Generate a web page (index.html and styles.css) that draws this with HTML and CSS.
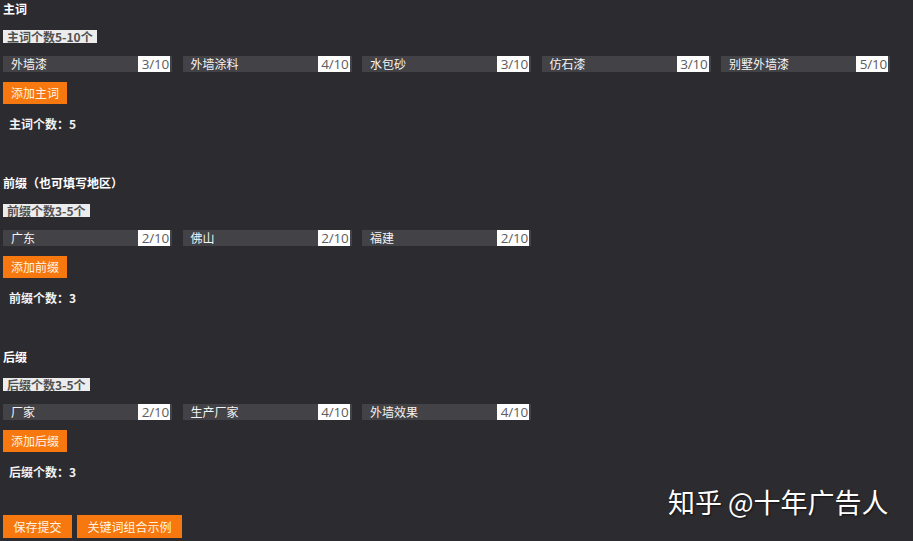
FILE: index.html
```html
<!DOCTYPE html>
<html lang="zh-CN">
<head>
<meta charset="utf-8">
<title>关键词设置</title>
<link rel="stylesheet" href="styles.css">
</head>
<body>
<div class="page">
  <section class="group">
    <div class="group-title">主词</div>
    <div class="hint"><span>主词个数5-10个</span></div>
    <div class="inputs">
      <div class="field"><span class="field-text">外墙漆</span><span class="count">3/10</span></div>
      <div class="field"><span class="field-text">外墙涂料</span><span class="count">4/10</span></div>
      <div class="field"><span class="field-text">水包砂</span><span class="count">3/10</span></div>
      <div class="field"><span class="field-text">仿石漆</span><span class="count">3/10</span></div>
      <div class="field"><span class="field-text">别墅外墙漆</span><span class="count">5/10</span></div>
    </div>
    <button class="btn btn-add">添加主词</button>
    <div class="total">主词个数：5</div>
  </section>

  <section class="group">
    <div class="group-title">前缀（也可填写地区）</div>
    <div class="hint"><span>前缀个数3-5个</span></div>
    <div class="inputs">
      <div class="field"><span class="field-text">广东</span><span class="count">2/10</span></div>
      <div class="field"><span class="field-text">佛山</span><span class="count">2/10</span></div>
      <div class="field"><span class="field-text">福建</span><span class="count">2/10</span></div>
    </div>
    <button class="btn btn-add">添加前缀</button>
    <div class="total">前缀个数：3</div>
  </section>

  <section class="group">
    <div class="group-title">后缀</div>
    <div class="hint"><span>后缀个数3-5个</span></div>
    <div class="inputs">
      <div class="field"><span class="field-text">厂家</span><span class="count">2/10</span></div>
      <div class="field"><span class="field-text">生产厂家</span><span class="count">4/10</span></div>
      <div class="field"><span class="field-text">外墙效果</span><span class="count">4/10</span></div>
    </div>
    <button class="btn btn-add">添加后缀</button>
    <div class="total">后缀个数：3</div>
  </section>

  <div class="actions">
    <button class="btn btn-wide">保存提交</button>
    <button class="btn btn-wide">关键词组合示例</button>
  </div>

  <div class="watermark">知乎 @十年广告人</div>
</div>
</body>
</html>
```
FILE: styles.css
```css
html, body {
  margin: 0;
  padding: 0;
  background: #2c2b2f;
}
body {
  font-family: "Noto Sans CJK SC", "Noto Sans", sans-serif;
  font-size: 12px;
  color: #ffffff;
  width: 913px;
  height: 541px;
  overflow: hidden;
}
.page {
  position: relative;
  padding: 0 3px;
  height: 541px;
  box-sizing: border-box;
}
.group {
  height: 174px;
}
.group-title {
  font-weight: bold;
  line-height: 18px;
  height: 18px;
}
.hint {
  margin-top: 12px;
  height: 13px;
  line-height: 13px;
}
.hint span {
  display: inline-block;
  background: #ececec;
  color: #505050;
  font-weight: bold;
  padding: 0 4px;
  height: 13px;
  line-height: 13px;
}
.inputs {
  margin-top: 13px;
  display: flex;
  gap: 10.5px;
  height: 16px;
}
.field {
  width: 169px;
  height: 16px;
  background: #434246;
  display: flex;
  align-items: stretch;
  padding-right: 2px;
  box-sizing: border-box;
}
.field-text {
  flex: 1;
  padding-left: 8px;
  line-height: 16px;
  color: #f4f4f4;
}
.count {
  width: 32px;
  background: #ffffff;
  color: #5d5d5d;
  font-family: "Open Sans", "Noto Sans", sans-serif;
  font-size: 13.5px;
  letter-spacing: -0.2px;
  line-height: 16px;
  text-align: right;
  padding-right: 1px;
  box-sizing: border-box;
}
.btn {
  display: block;
  border: 0;
  margin: 0;
  font-family: "Noto Sans CJK SC", "Noto Sans", sans-serif;
  font-size: 12px;
  color: #fff4e4;
  background: #f7780f;
  cursor: pointer;
}
.btn-add {
  margin-top: 10px;
  height: 22px;
  padding: 0 8px;
  line-height: 22px;
}
.total {
  margin-top: 11px;
  padding-left: 6px;
  font-weight: bold;
  line-height: 18px;
  color: #f2f2f2;
}
.actions {
  margin-top: -7px;
  display: flex;
  gap: 5px;
}
.btn-wide {
  height: 23px;
  padding: 0 10.5px;
  line-height: 23px;
}
.watermark {
  position: absolute;
  left: 668px;
  top: 483px;
  font-size: 27px;
  line-height: 38px;
  color: #ffffff;
  text-shadow: 1px 1px 2px rgba(0, 0, 0, 0.6);
  white-space: nowrap;
}
```
